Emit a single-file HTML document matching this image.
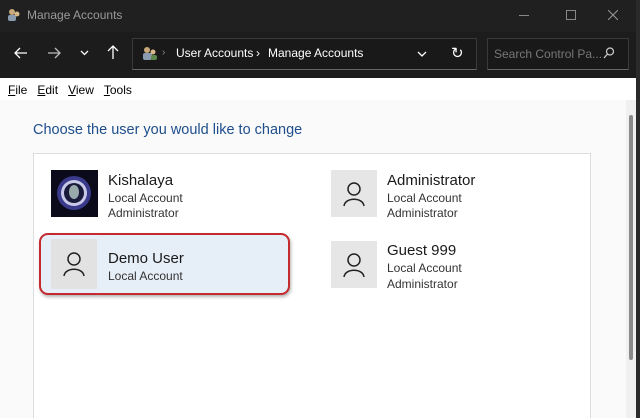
<!DOCTYPE html>
<html><head><style>
*{margin:0;padding:0;box-sizing:border-box}
html,body{width:640px;height:418px;overflow:hidden}
body{background:#202020;font-family:"Liberation Sans",sans-serif;position:relative}
.a{position:absolute}
.t{color:#fff;font-size:12px}
.av{position:absolute;width:46px;height:47px;background:#e6e6e6}
.n{position:absolute;font-size:15px;color:#1a1a1a}
.s{position:absolute;font-size:12px;color:#333}
</style></head><body>
<div class="a" style="left:0;top:0;width:640px;height:32px;background:#202020"></div>
<div class="a" style="left:7px;top:8px;width:14px;height:14px"><svg width="14" height="14"><circle cx="5" cy="4" r="3" fill="#c9a97a"/><rect x="1" y="7" width="8" height="6" rx="2" fill="#8a9bb0"/><circle cx="10" cy="6" r="2.5" fill="#d8b98a"/></svg></div>
<div class="a" style="left:27px;top:8px;font-size:12px;color:#9a9a9a">Manage Accounts</div>
<div class="a" style="left:519px;top:15px;width:10px;height:1px;background:#888"></div>
<div class="a" style="left:566px;top:10px;width:10px;height:10px;border:1px solid #888"></div>
<svg class="a" style="left:608px;top:10px" width="10" height="10"><path d="M0 0L10 10M10 0L0 10" stroke="#999" stroke-width="1"/></svg>
<div class="a" style="left:0;top:32px;width:640px;height:46px;background:#1c1c1c"></div>
<svg class="a" style="left:14px;top:47px" width="14" height="12"><path d="M13 6H1M6 1L1 6L6 11" fill="none" stroke="#fff" stroke-width="1.3"/></svg>
<svg class="a" style="left:47px;top:47px" width="14" height="12"><path d="M1 6H13M8 1L13 6L8 11" fill="none" stroke="#bbb" stroke-width="1.3"/></svg>
<svg class="a" style="left:80px;top:50px" width="9" height="6"><path d="M1 1L4.5 4.5L8 1" fill="none" stroke="#fff" stroke-width="1.3"/></svg>
<svg class="a" style="left:107px;top:45px" width="12" height="15"><path d="M6 14V1M1 6L6 1L11 6" fill="none" stroke="#fff" stroke-width="1.3"/></svg>
<div class="a" style="left:132px;top:38px;width:345px;height:32px;background:#191919;border:1px solid #3a3a3a;border-bottom:1px solid #666"></div>
<div class="a" style="left:142px;top:45px"><svg width="16" height="16"><circle cx="5" cy="5" r="3" fill="#c9a97a"/><rect x="1" y="8" width="9" height="7" rx="2" fill="#8a9bb0"/><circle cx="11" cy="7" r="2.5" fill="#d8b98a"/><rect x="9" y="10" width="6" height="5" rx="2" fill="#5c8a4a"/></svg></div>
<div class="a" style="left:162px;top:47px;color:#888;font-size:10px">›</div>
<div class="a t" style="left:176px;top:46px">User Accounts</div>
<div class="a t" style="left:256px;top:46px">›</div>
<div class="a t" style="left:268px;top:46px">Manage Accounts</div>
<svg class="a" style="left:417px;top:51px" width="10" height="6"><path d="M1 1L5 5L9 1" fill="none" stroke="#fff" stroke-width="1.3"/></svg>
<div class="a t" style="left:451px;top:44px;font-size:15px">↻</div>
<div class="a" style="left:487px;top:38px;width:142px;height:32px;background:#191919;border:1px solid #3a3a3a;border-bottom:1px solid #666"></div>
<div class="a" style="left:494px;top:47px;font-size:12px;color:#777">Search Control Pa...</div>
<svg class="a" style="left:603px;top:47px" width="11" height="12"><circle cx="7" cy="4.5" r="3.5" fill="none" stroke="#ccc" stroke-width="1.2"/><path d="M4.5 7L1 11" stroke="#ccc" stroke-width="1.3"/></svg>
<div class="a" style="left:0;top:78px;width:636px;height:340px;background:#fafafa"></div>
<div class="a" style="left:0;top:78px;width:636px;height:22px;background:#fff"></div>
<div class="a" style="left:8px;top:83px;font-size:12px;color:#000"><u>F</u>ile&nbsp;&nbsp;&nbsp;<u>E</u>dit&nbsp;&nbsp;&nbsp;<u>V</u>iew&nbsp;&nbsp;&nbsp;<u>T</u>ools</div>
<div class="a" style="left:33px;top:122px;font-size:14.5px;color:#1e4e8c">Choose the user you would like to change</div>
<div class="a" style="left:33px;top:153px;width:558px;height:270px;background:#fff;border:1px solid #ddd"></div>
<div class="a" style="left:51px;top:170px;width:47px;height:47px;background:#0a0a1a;overflow:hidden"><svg width="47" height="47"><circle cx="23" cy="23" r="17" fill="#3a3a8a"/><circle cx="23" cy="23" r="13" fill="#c8c8e8"/><circle cx="23" cy="23" r="10" fill="#1a1a3a"/><ellipse cx="23" cy="22" rx="5" ry="7" fill="#9aa"/></svg></div>
<div class="n" style="left:108px;top:172px">Kishalaya</div>
<div class="s" style="left:108px;top:191px">Local Account</div>
<div class="s" style="left:108px;top:206px">Administrator</div>
<div class="a" style="left:39px;top:233px;width:251px;height:62px;border:2.5px solid #c42a2e;border-radius:9px;background:#e6eef7;box-shadow:1px 2px 3px rgba(0,0,0,.3)"></div>
<div class="av" style="left:51px;top:239px;height:50px;background:#e2e2e2"></div>
<svg class="a" style="left:61px;top:251px" width="26" height="26"><circle cx="13" cy="8" r="6" fill="none" stroke="#222" stroke-width="1.5"/><path d="M3 25 C4 16 22 16 23 25" fill="none" stroke="#222" stroke-width="1.5"/></svg>
<div class="n" style="left:108px;top:250px">Demo User</div>
<div class="s" style="left:108px;top:269px">Local Account</div>
<div class="av" style="left:331px;top:170px"></div>
<svg class="a" style="left:341px;top:181px" width="26" height="26"><circle cx="13" cy="8" r="6" fill="none" stroke="#222" stroke-width="1.5"/><path d="M3 25 C4 16 22 16 23 25" fill="none" stroke="#222" stroke-width="1.5"/></svg>
<div class="n" style="left:387px;top:172px">Administrator</div>
<div class="s" style="left:387px;top:191px">Local Account</div>
<div class="s" style="left:387px;top:206px">Administrator</div>
<div class="av" style="left:331px;top:241px"></div>
<svg class="a" style="left:341px;top:252px" width="26" height="26"><circle cx="13" cy="8" r="6" fill="none" stroke="#222" stroke-width="1.5"/><path d="M3 25 C4 16 22 16 23 25" fill="none" stroke="#222" stroke-width="1.5"/></svg>
<div class="n" style="left:387px;top:242px">Guest 999</div>
<div class="s" style="left:387px;top:261px">Local Account</div>
<div class="s" style="left:387px;top:277px">Administrator</div>
<div class="a" style="left:626px;top:100px;width:10px;height:318px;background:#f0f0f0"></div>
<div class="a" style="left:629px;top:115px;width:4px;height:245px;background:#8a8a8a;border-radius:2px"></div>
<div class="a" style="left:636px;top:0;width:4px;height:418px;background:#2a2a2a"></div>
</body></html>
